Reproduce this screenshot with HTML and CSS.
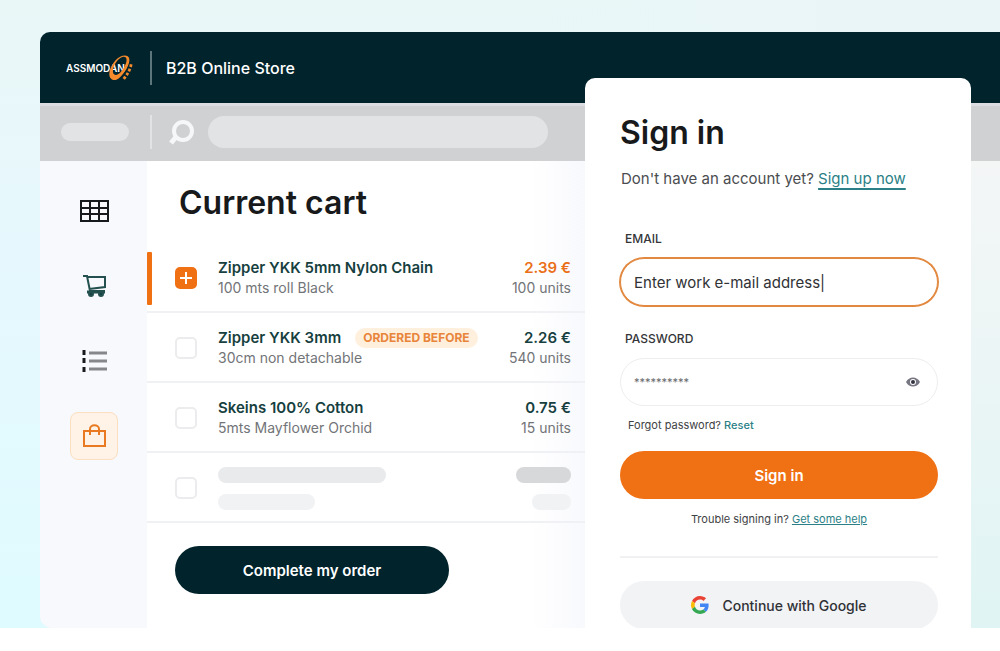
FILE: index.html
```html
<!DOCTYPE html>
<html lang="en">
<head>
    <meta charset="UTF-8">
    <meta name="viewport" content="width=device-width, initial-scale=1.0">
    <title>B2B Online Store</title>
    <link rel="stylesheet" href="styles.css">
</head>
<body>
    <div class="hero">
        <div class="app">
            <header class="topbar">
                <div class="logo">
                    <span class="logo-text">ASSMODAN</span>
                    <svg class="logo-mark" width="26" height="28" viewBox="0 0 28 30" fill="none">
                        <path fill-rule="evenodd" fill="#f58a2c" d="M5 27C0 24 3 14 9 7C15 0 23 0 24 5C25 11 19 20 14 25C11 28 8 29 5 27ZM8 22C11 24 16 19 19 13C22 8 22 3 18 3C14 3 9 9 7 14C6 18 6 21 8 22Z"/>
                        <path stroke="#f58a2c" stroke-width="3" stroke-dasharray="3 2" d="M26 11C25 17 22 22 17 28"/>
                    </svg>
                </div>
                <span class="divider"></span>
                <span class="store-name">B2B Online Store</span>
            </header>

            <div class="toolbar">
                <span class="pill"></span>
                <span class="divider"></span>
                <svg class="search-icon" width="26" height="26" viewBox="0 0 26 26" fill="none" stroke="#f6f7f8" stroke-width="4">
                    <circle cx="15" cy="12" r="9"/>
                    <path d="M8 18L3 24" stroke-width="5"/>
                </svg>
                <input class="search" type="text" aria-label="Search">
            </div>

            <div class="content">
                <nav class="sidebar">
                    <a href="#" class="nav-item" aria-label="Catalog">
                        <svg width="30" height="22" viewBox="0 0 30 22" fill="none" stroke="#161a1c" stroke-width="2">
                            <rect x="2" y="1" width="27" height="20"/>
                            <path d="M2 8H29M2 14H29M11 1V21M20 1V21"/>
                        </svg>
                    </a>
                    <a href="#" class="nav-item" aria-label="Cart">
                        <svg width="26" height="24" viewBox="0 0 26 24" fill="none" stroke="#24504f" stroke-width="2">
                            <path d="M2 2H6L9 17H24M6 3H24V13L8 15"/>
                            <path d="M6 18H24" stroke-width="3"/>
                            <circle cx="10" cy="20" r="2" fill="#123f40"/>
                            <circle cx="20" cy="20" r="2" fill="#123f40"/>
                        </svg>
                    </a>
                    <a href="#" class="nav-item" aria-label="Lists">
                        <svg width="28" height="24" viewBox="0 0 28 24" fill="none">
                            <path stroke="#85878a" stroke-width="3" d="M9 4H27M9 12H27M9 20H27"/>
                            <path stroke="#161a1c" stroke-width="3" d="M4 1V6M4 9V14M4 18V23"/>
                        </svg>
                    </a>
                    <a href="#" class="nav-item active" aria-label="Orders">
                        <svg width="26" height="26" viewBox="0 0 26 26" fill="none" stroke="#ea7a22" stroke-width="2">
                            <path d="M3 8H24V23H3Z"/>
                            <path d="M9 12V6C9 1 18 1 18 6V12"/>
                        </svg>
                    </a>
                </nav>

                <main class="cart">
                    <h1>Current cart</h1>
                    <ul class="items">
                        <li class="item selected">
                            <input type="checkbox" id="item1" checked>
                            <label for="item1" class="info">
                                <span class="name">Zipper YKK 5mm Nylon Chain</span>
                                <span class="detail">100 mts roll Black</span>
                            </label>
                            <div class="amount">
                                <span class="price">2.39 €</span>
                                <span class="detail">100 units</span>
                            </div>
                        </li>
                        <li class="item">
                            <input type="checkbox" id="item2">
                            <label for="item2" class="info">
                                <span class="name">Zipper YKK 3mm <span class="tag">ORDERED BEFORE</span></span>
                                <span class="detail">30cm non detachable</span>
                            </label>
                            <div class="amount">
                                <span class="price">2.26 €</span>
                                <span class="detail">540 units</span>
                            </div>
                        </li>
                        <li class="item">
                            <input type="checkbox" id="item3">
                            <label for="item3" class="info">
                                <span class="name">Skeins 100% Cotton</span>
                                <span class="detail">5mts Mayflower Orchid</span>
                            </label>
                            <div class="amount">
                                <span class="price">0.75 €</span>
                                <span class="detail">15 units</span>
                            </div>
                        </li>
                        <li class="item loading">
                            <input type="checkbox" aria-label="Loading item">
                            <div class="info">
                                <span class="bar bar-name"></span>
                                <span class="bar bar-detail"></span>
                            </div>
                            <div class="amount">
                                <span class="bar bar-price"></span>
                                <span class="bar bar-units"></span>
                            </div>
                        </li>
                    </ul>
                    <button type="button" class="btn btn-dark">Complete my order</button>
                </main>
            </div>
        </div>

        <form class="signin">
            <h2>Sign in</h2>
            <p class="signup">Don't have an account yet? <a href="#">Sign up now</a></p>

            <label class="field-label" for="email">EMAIL</label>
            <input class="field focused" type="text" id="email" value="Enter work e-mail address|">

            <label class="field-label" for="password">PASSWORD</label>
            <div class="field password">
                <input type="password" id="password" placeholder="**********">
                <button type="button" class="reveal" aria-label="Show password">
                    <svg width="14" height="10" viewBox="0 0 14 10">
                        <path fill="#777783" d="M0 5C3 -1 11 -1 14 5C11 11 3 11 0 5Z"/>
                        <circle cx="7" cy="5" r="3" fill="#fff"/>
                        <circle cx="7" cy="5" r="2" fill="#33333f"/>
                    </svg>
                </button>
            </div>

            <p class="forgot">Forgot password? <a href="#">Reset</a></p>
            <button type="submit" class="btn btn-orange">Sign in</button>
            <p class="trouble">Trouble signing in? <a href="#">Get some help</a></p>
            <hr>
            <button type="button" class="btn btn-google">
                <svg width="18" height="18" viewBox="0 0 48 48">
                    <path fill="#ea4335" d="M24 9.500c3.540 0 6.710 1.220 9.210 3.600l6.850-6.850C35.900 2.380 30.470 0 24 0 14.620 0 6.510 5.380 2.560 13.220l7.980 6.190C12.430 13.720 17.740 9.500 24 9.500z"/>
                    <path fill="#4285f4" d="M46.980 24.550c0-1.570-.15-3.090-.38-4.550H24v9.020h12.940c-.58 2.960-2.260 5.480-4.780 7.180l7.730 6c4.510-4.180 7.090-10.360 7.090-17.650z"/>
                    <path fill="#fbbc05" d="M10.530 28.590c-.48-1.450-.76-2.990-.76-4.590s.27-3.140.76-4.590l-7.980-6.190C.92 16.460 0 20.120 0 24c0 3.880.92 7.540 2.560 10.780l7.970-6.190z"/>
                    <path fill="#34a853" d="M24 48c6.480 0 11.930-2.130 15.890-5.810l-7.730-6c-2.150 1.450-4.920 2.300-8.160 2.300-6.260 0-11.570-4.220-13.470-9.910l-7.980 6.190C6.510 42.620 14.620 48 24 48z"/>
                </svg>
                Continue with Google
            </button>
        </form>
    </div>
</body>
</html>
```
FILE: styles.css
```css
* {
    margin: 0;
    padding: 0;
    box-sizing: border-box;
}

body {
    font-family: Inter, 'Liberation Sans', sans-serif;
    background: #ffffff;
    color: #17191b;
}

input,
button {
    font-family: inherit;
    border: none;
    outline: none;
}

.hero {
    position: relative;
    padding: 32px 0 0 40px;
    overflow: hidden;
    background:
        linear-gradient(90deg, transparent 50%, #e9f5f6 100%),
        linear-gradient(180deg, #eaf7f7 0%, #e6f8fd 40%, #dffbff 100%);
}

.app {
    border-radius: 10px 0 0 12px;
    overflow: hidden;
}

.topbar,
.toolbar {
    display: flex;
    align-items: center;
}

.topbar {
    height: 71px;
    padding-left: 26px;
    background: #00232c;
    color: #ffffff;
}

.logo {
    display: flex;
    align-items: center;
    width: 84px;
}

.logo-text {
    width: 41px;
    font-size: 10px;
    font-weight: 600;
}

.divider {
    width: 2px;
    height: 34px;
    background: #5d767c;
}

.store-name {
    margin-left: 14px;
    font-size: 16px;
    font-weight: 500;
}

.toolbar {
    height: 58px;
    padding-left: 21px;
    box-shadow: inset 0 3px #dcdde2;
    background: #d0d1d3;
}

.toolbar .divider {
    margin: 0 16px 0 21px;
    background: #e2e3e5;
}

.pill {
    width: 68px;
    height: 18px;
    border-radius: 9px;
    background: #e2e3e5;
}

.search {
    width: 340px;
    height: 32px;
    margin-left: 14px;
    padding: 0 16px;
    border-radius: 16px;
    background: #e2e3e5;
}

.content {
    display: flex;
    padding-right: 29px;
    background: linear-gradient(180deg, #f4f6f6, #e0f4f4);
}

.sidebar {
    display: flex;
    flex-direction: column;
    align-items: center;
    gap: 27px;
    width: 107px;
    padding-top: 26px;
    background: #f8f9fc;
}

.nav-item {
    display: flex;
    align-items: center;
    justify-content: center;
    width: 48px;
    height: 48px;
    border-radius: 8px;
}

.nav-item.active {
    border: 1px solid #fbdfc0;
    background: #fef3e6;
}

.cart {
    flex: 1;
    padding: 20px 386px 34px 0;
    background: linear-gradient(270deg, #f8f9fd 386px, #ffffff 440px);
}

.cart h1,
.signin h2 {
    font-size: 32px;
    font-weight: 600;
    line-height: 44px;
}

.cart h1 {
    margin: 0 0 18px 32px;
}

.items {
    list-style: none;
}

.item {
    display: flex;
    align-items: center;
    height: 70px;
    padding: 2px 14px 0 28px;
    border-bottom: 2px solid #f0f1f4;
}

.item.selected {
    padding-left: 0;
}

.item.selected::before {
    content: '';
    width: 5px;
    height: 53px;
    margin-right: 23px;
    border-radius: 1px;
    background: #f07014;
}

.item input {
    display: flex;
    align-items: center;
    justify-content: center;
    width: 22px;
    height: 22px;
    margin-right: 21px;
    appearance: none;
    border: 2px solid #ececee;
    border-radius: 5px;
    background: #ffffff;
}

.item input:checked {
    border-color: #f07014;
    background:
        linear-gradient(#ffffff, #ffffff) center / 12px 2px no-repeat,
        linear-gradient(#ffffff, #ffffff) center / 2px 12px no-repeat,
        #f07014;
}

.info,
.amount {
    display: flex;
    flex-direction: column;
    white-space: nowrap;
}

.info {
    flex: 1;
}

.amount {
    align-items: flex-end;
}

.name,
.price {
    color: #173f40;
    font-size: 15px;
    font-weight: 600;
    line-height: 20px;
}

.name {
    display: flex;
    align-items: center;
}

.selected .price {
    color: #ea6f18;
}

.detail {
    color: #727477;
    font-size: 14px;
    line-height: 20px;
}

.tag {
    margin-left: 14px;
    padding: 0 8px;
    border-radius: 10px;
    background: #fff0de;
    color: #e8853a;
    font-size: 12px;
    font-weight: 700;
}

.loading .info,
.loading .amount {
    gap: 11px;
}

.bar {
    height: 16px;
    border-radius: 8px;
    background: #f1f2f4;
}

.bar-name {
    width: 168px;
    background: #e9eaec;
}

.bar-detail {
    width: 97px;
}

.bar-price {
    width: 55px;
    background: #d7d8da;
}

.bar-units {
    width: 39px;
}

.btn {
    display: flex;
    align-items: center;
    justify-content: center;
    width: 100%;
    height: 48px;
    border-radius: 24px;
    color: #ffffff;
    font-size: 15px;
    font-weight: 600;
    cursor: pointer;
}

.btn-dark {
    width: 274px;
    margin: 23px 0 0 28px;
    background: #00232c;
}

.signin {
    position: absolute;
    top: 78px;
    right: 29px;
    bottom: 0;
    width: 386px;
    padding: 33px 33px 0 35px;
    border-radius: 10px 10px 0 0;
    background: #ffffff;
}

.signin a {
    color: #2b7f86;
}

.signup {
    margin: 14px 0 42px 1px;
    color: #4b4d50;
    font-size: 15px;
    line-height: 20px;
}

.signup a {
    text-underline-offset: 4px;
    text-decoration-thickness: 2px;
}

.field-label {
    display: block;
    margin: 0 0 11px 5px;
    color: #333538;
    font-size: 12px;
    font-weight: 500;
    line-height: 16px;
}

.field {
    width: 100%;
    height: 48px;
    margin-bottom: 25px;
    padding: 0 13px;
    border: 1px solid #eeeef0;
    border-radius: 24px;
    color: #303235;
    font-size: 15px;
}

.field.focused {
    border-color: #e2883f;
    box-shadow: 0 0 0 1px #e2883f;
}

.password {
    display: flex;
    align-items: center;
    justify-content: space-between;
    margin-bottom: 11px;
    padding-right: 17px;
}

.password input {
    flex: 1;
    font-size: 11px;
}

.password input::placeholder {
    color: #66686b;
}

.reveal {
    display: flex;
    background: none;
}

.forgot,
.trouble {
    color: #404245;
    font-size: 11px;
    line-height: 16px;
}

.forgot {
    margin: 0 0 18px 8px;
}

.forgot a {
    font-weight: 500;
    text-decoration: none;
}

.btn-orange {
    background: #f07014;
}

.trouble {
    margin: 12px 0 29px;
    text-align: center;
}

.signin hr {
    height: 2px;
    margin-bottom: 23px;
    border: none;
    background: #f1f1f3;
}

.btn-google {
    gap: 13px;
    background: #f2f3f5;
    color: #303235;
    font-size: 14px;
    font-weight: 500;
}
```
